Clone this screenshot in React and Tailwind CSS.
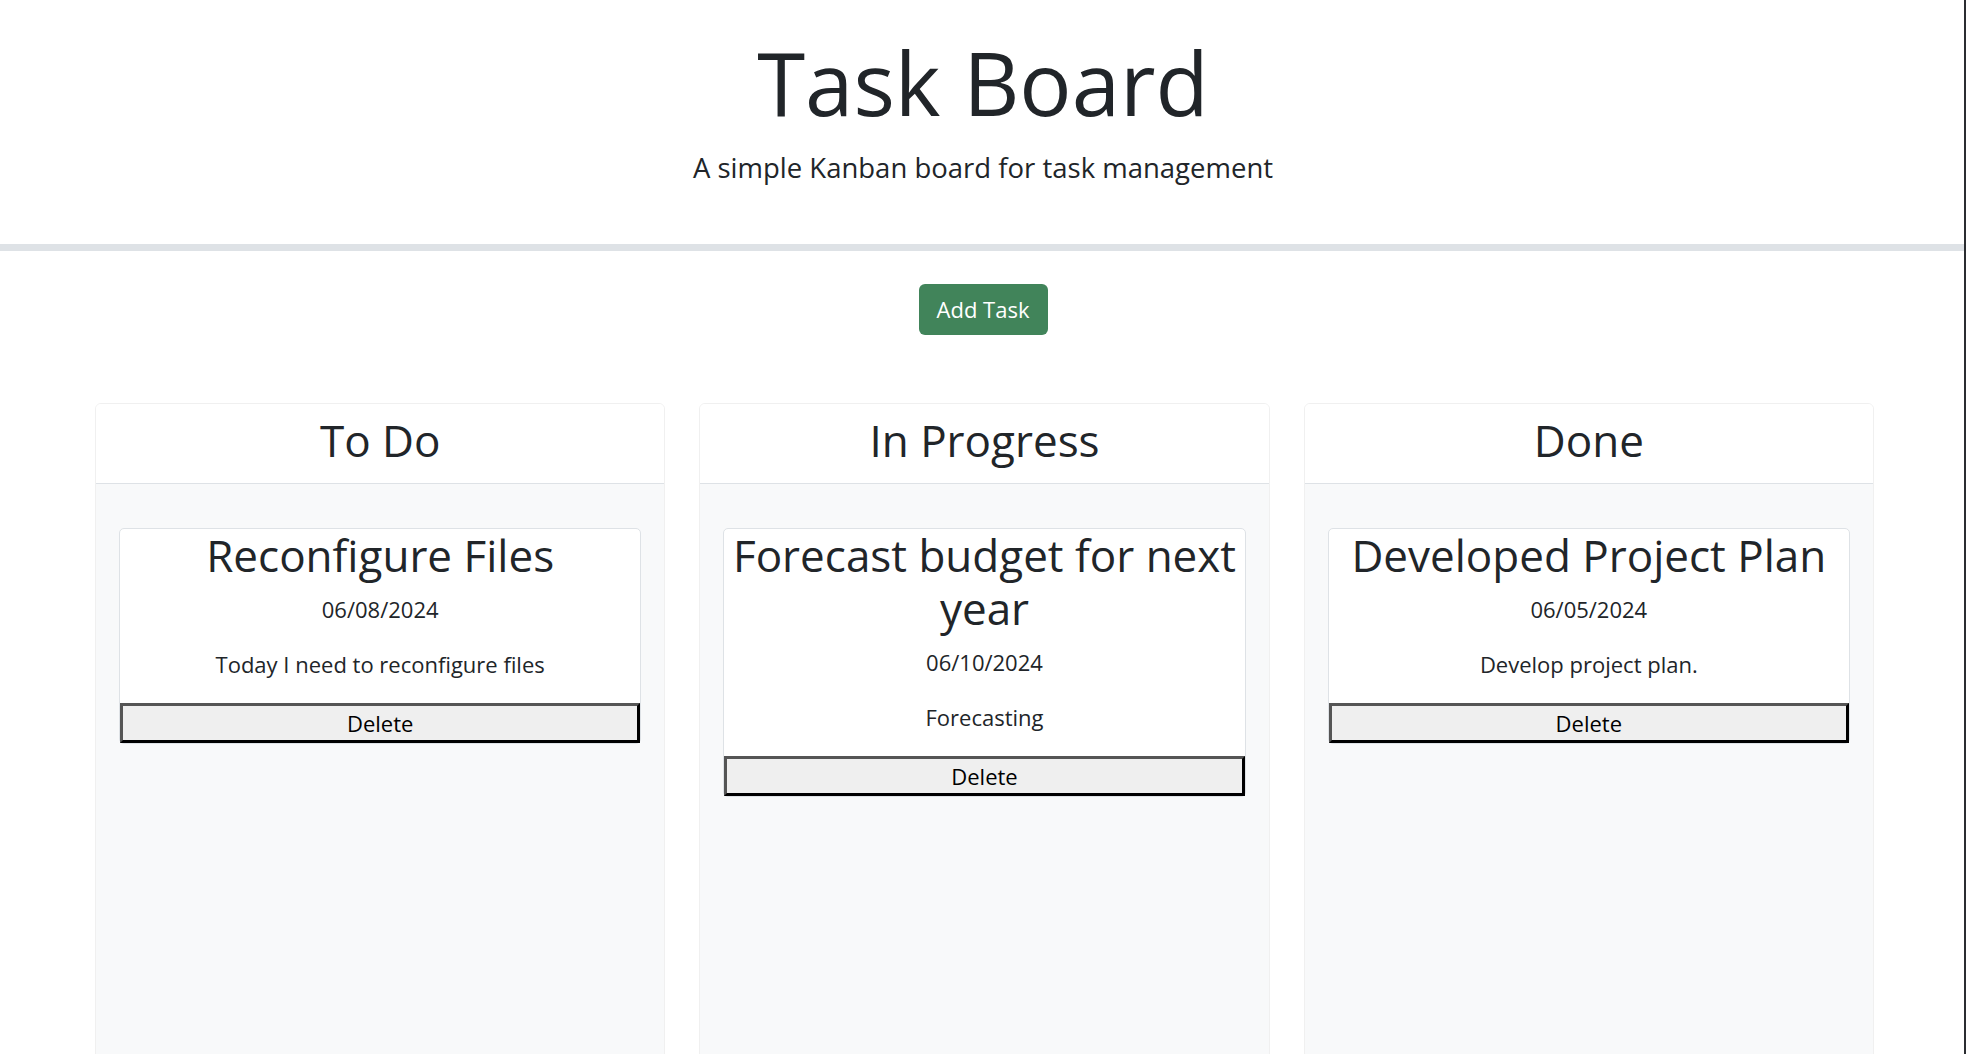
import { useState } from 'react'

const initialTasks = [
  { id: 1, title: 'Reconfigure Files', date: '06/08/2024', description: 'Today I need to reconfigure files', status: 'todo' },
  { id: 2, title: 'Forecast budget for next year', date: '06/10/2024', description: 'Forecasting', status: 'inprogress' },
  { id: 3, title: 'Developed Project Plan', date: '06/05/2024', description: 'Develop project plan.', status: 'done' },
]

const columns = [
  { key: 'todo', label: 'To Do' },
  { key: 'inprogress', label: 'In Progress' },
  { key: 'done', label: 'Done' },
]

function TaskCard({ task, onDelete }) {
  return (
    <div className="bg-white border border-[#dee2e6] rounded-[5px] text-center">
      <h2 className="text-[44px] leading-[1.2] mb-[11px] px-2">{task.title}</h2>
      <p className="text-[22px] leading-[1.5] mb-[22px]">{task.date}</p>
      <p className="text-[22px] leading-[1.5] mb-[22px]">{task.description}</p>
      <button
        onClick={() => onDelete(task.id)}
        className="block w-full h-[40px] bg-[#efefef] text-black text-[22px] leading-none border-[3px] border-t-[#555] border-l-[#555] border-b-black border-r-black"
      >
        Delete
      </button>
    </div>
  )
}

export default function App() {
  const [tasks, setTasks] = useState(initialTasks)

  const handleDelete = (id) => {
    setTasks(tasks.filter((t) => t.id !== id))
  }

  return (
    <div
      className="h-screen overflow-hidden bg-white text-[#212529] shadow-[inset_-2px_0_0_#2b2d31]"
      style={{ fontFamily: '"Open Sans", "Noto Sans", sans-serif' }}
    >
      <header className="h-[244px] pt-[30px] text-center">
        <h1 className="text-[87px] leading-[1.2] mb-[13px]">Task Board</h1>
        <p className="text-[27.5px] leading-[1.5]">A simple Kanban board for task management</p>
      </header>
      <div className="h-[7px] bg-[#dee2e6] mr-[2px]"></div>

      <div className="flex justify-center pt-[33px]">
        <button className="w-[129px] h-[51px] rounded-[6px] bg-[#41845a] text-white text-[22px]">
          Add Task
        </button>
      </div>

      <div className="mt-[68px] pl-[95px] pr-[92px] grid grid-cols-3 gap-[34px]">
        {columns.map((col) => (
          <div key={col.key} className="border border-[#f0f0f0] rounded-[6px] overflow-hidden">
            <div className="h-[80px] bg-white border-b border-[#dee2e6] flex items-center justify-center pb-[7px]">
              <h2 className="text-[44px] leading-[1.2]">{col.label}</h2>
            </div>
            <div className="bg-[#f8f9fa] min-h-[700px] pt-[44px] px-[23px] flex flex-col gap-[22px]">
              {tasks
                .filter((t) => t.status === col.key)
                .map((task) => (
                  <TaskCard key={task.id} task={task} onDelete={handleDelete} />
                ))}
            </div>
          </div>
        ))}
      </div>
    </div>
  )
}
